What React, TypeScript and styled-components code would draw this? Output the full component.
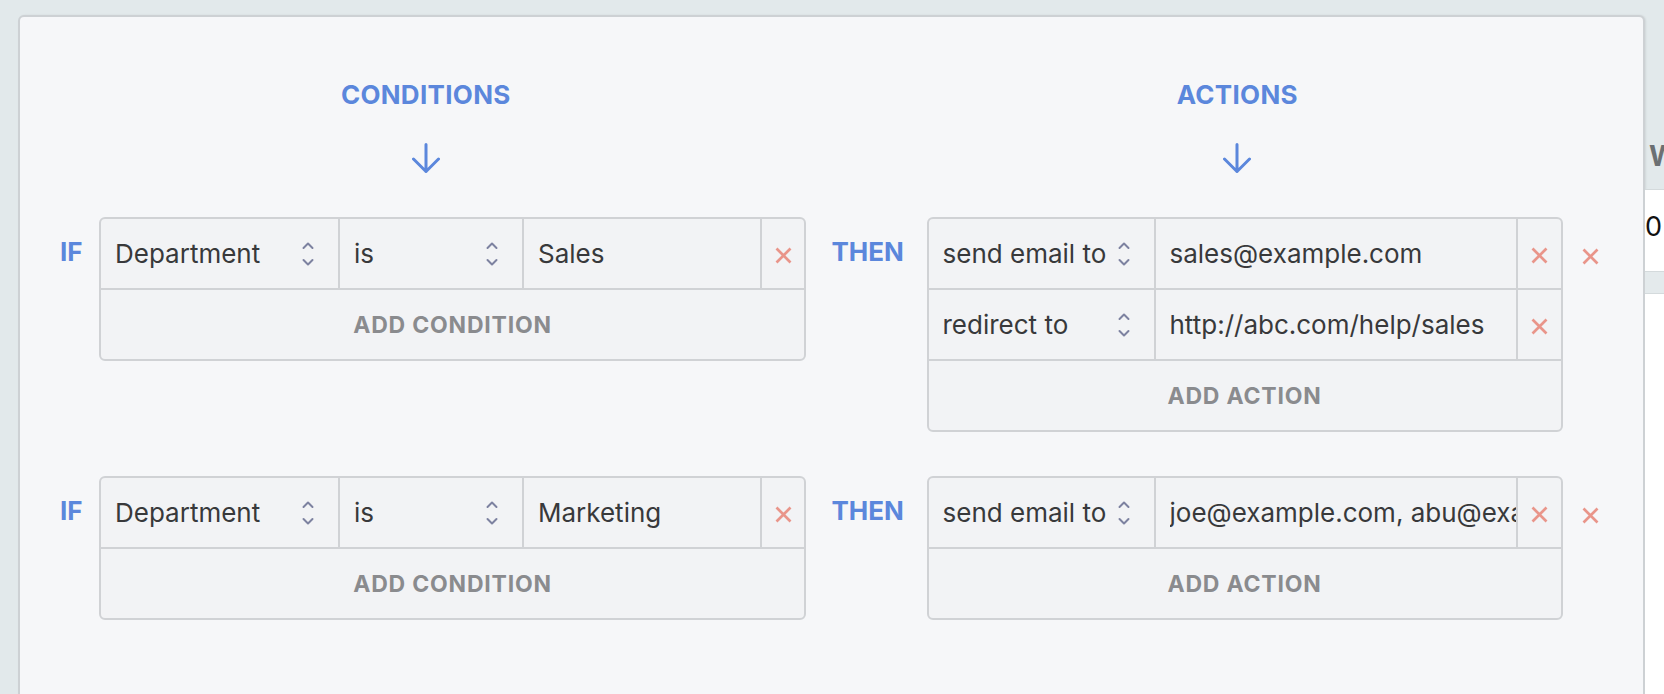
import styled, { createGlobalStyle } from "styled-components";

const GlobalStyle = createGlobalStyle`
  html, body {
    margin: 0;
    padding: 0;
    background: #e2e9eb;
    overflow: hidden;
  }
  body {
    font-family: Inter, "Noto Sans", sans-serif;
    color: #38393b;
  }
`;

const BLUE = "#5b87dc";
const LINE = "#d0d2d5";

const Page = styled.div`
  display: flex;
  align-items: flex-start;
  height: 694px;
  overflow: hidden;
`;

const Panel = styled.div`
  box-sizing: border-box;
  flex: 0 0 1627px;
  min-height: 720px;
  margin: 15px 0 0 18px;
  padding-top: 62px;
  background: #f6f7f9;
  border: 2px solid #cdd1d4;
  border-radius: 6px;
  box-shadow: 1px 0 2px rgba(0, 0, 0, 0.08);
`;

const Halves = styled.div<{ $gap?: number }>`
  display: grid;
  grid-template-columns: 1fr 1fr;
  margin-top: ${({ $gap }) => $gap ?? 0}px;
`;

const HeaderCell = styled.div`
  display: flex;
  flex-direction: column;
  align-items: center;
`;

const HeaderTitle = styled.div`
  font-size: 26px;
  line-height: 32px;
  font-weight: 700;
  color: ${BLUE};
  letter-spacing: 0.3px;
`;

const ArrowWrap = styled.div`
  margin-top: 32px;
  height: 30px;
  svg {
    display: block;
  }
`;

const Side = styled.div<{ $inset?: number }>`
  display: flex;
  align-items: flex-start;
  padding-left: ${({ $inset }) => $inset ?? 0}px;
`;

const Keyword = styled.div<{ $width: number }>`
  flex: 0 0 ${({ $width }) => $width}px;
  padding-top: 19px;
  font-size: 26px;
  line-height: 32px;
  font-weight: 700;
  color: ${BLUE};
`;

const Box = styled.div<{ $width: number }>`
  box-sizing: border-box;
  flex: 0 0 ${({ $width }) => $width}px;
  border: 2px solid ${LINE};
  border-radius: 6px;
  background: #f2f3f5;
  overflow: hidden;
`;

const Row = styled.div<{ $cols: string }>`
  display: grid;
  grid-template-columns: ${({ $cols }) => $cols};
  height: 69px;

  & + & {
    border-top: 2px solid ${LINE};
  }
`;

const Cell = styled.div`
  display: flex;
  align-items: center;
  min-width: 0;
  padding: 0 14px;
  font-size: 26px;
  white-space: nowrap;

  & + & {
    border-left: 2px solid ${LINE};
  }
`;

const SelectCell = styled(Cell)`
  justify-content: space-between;
  padding-right: 24px;
`;

const InputCell = styled(Cell)`
  padding-right: 0;
`;

const TextInput = styled.input`
  width: 100%;
  min-width: 0;
  padding: 0;
  border: none;
  outline: none;
  background: transparent;
  font-family: inherit;
  font-size: 26px;
  color: #38393b;
`;

const RemoveCell = styled(Cell)`
  justify-content: center;
  padding: 4px 0 0;
`;

const AddButton = styled.button`
  display: block;
  width: 100%;
  height: 69px;
  padding: 0;
  border: none;
  border-top: 2px solid ${LINE};
  background: transparent;
  font-family: inherit;
  font-size: 23px;
  font-weight: 700;
  letter-spacing: 0.8px;
  color: #8a8b8e;
  text-transform: uppercase;
  box-sizing: content-box;
`;

const RemoveRule = styled.div`
  margin-left: 19px;
  padding-top: 31px;
  svg {
    display: block;
  }
`;

/* the table that sits behind the panel, only a sliver shows */
const Backdrop = styled.div`
  flex: 1;
  min-width: 0;
  display: flex;
  flex-direction: column;
  padding-top: 140px;
  height: 694px;
  box-sizing: border-box;
  overflow: hidden;
`;

const BackdropHead = styled.div`
  height: 49px;
  padding-left: 4px;
  font-size: 28px;
  line-height: 32px;
  font-weight: 700;
  color: #6b7073;
  white-space: nowrap;
`;

const BackdropRow = styled.div`
  display: flex;
  align-items: center;
  height: 82px;
  padding-bottom: 8px;
  box-sizing: border-box;
  border-top: 1px solid #d4dadc;
  background: #fff;
  font-size: 27px;
  color: #111;
`;

const BackdropBand = styled.div`
  height: 21px;
  border-top: 1px solid #d4dadc;
  border-bottom: 1px solid #d4dadc;
  background: #e4eaec;
`;

const BackdropRest = styled.div`
  flex: 1;
  background: #fff;
`;

const DownArrow = () => (
  <svg width="28" height="30" viewBox="0 0 28 30" fill="none" stroke={BLUE} strokeWidth="3" strokeLinecap="round" strokeLinejoin="round">
    <path d="M14 1.5 V28.5 M1.5 16 L14 28.5 L26.5 16" />
  </svg>
);

const Chevrons = () => (
  <svg width="12" height="24" viewBox="0 0 12 24" fill="none" stroke="#7d82a0" strokeWidth="2" strokeLinecap="round" strokeLinejoin="round">
    <polyline points="1.5,6 6,1.5 10.5,6" />
    <polyline points="1.5,18 6,22.5 10.5,18" />
  </svg>
);

const Cross = () => (
  <svg width="17" height="17" viewBox="0 0 17 17" fill="none" stroke="#e9958a" strokeWidth="2.7">
    <path d="M1.5 1.5 L15.5 15.5 M15.5 1.5 L1.5 15.5" />
  </svg>
);

type Condition = { field: string; op: string; value: string };
type Action = { type: string; value: string };
type Rule = { conditions: Condition[]; actions: Action[] };

const rules: Rule[] = [
  {
    conditions: [{ field: "Department", op: "is", value: "Sales" }],
    actions: [
      { type: "send email to", value: "sales@example.com" },
      { type: "redirect to", value: "http://abc.com/help/sales" },
    ],
  },
  {
    conditions: [{ field: "Department", op: "is", value: "Marketing" }],
    actions: [{ type: "send email to", value: "joe@example.com, abu@example.com" }],
  },
];

function RuleRow({ rule }: { rule: Rule }) {
  return (
    <Halves $gap={44}>
      <Side $inset={40}>
        <Keyword $width={39}>IF</Keyword>
        <Box $width={707}>
          {rule.conditions.map((c, i) => (
            <Row key={i} $cols="237px 184px 1fr 44px">
              <SelectCell>
                {c.field}
                <Chevrons />
              </SelectCell>
              <SelectCell>
                {c.op}
                <Chevrons />
              </SelectCell>
              <InputCell>
                <TextInput readOnly value={c.value} />
              </InputCell>
              <RemoveCell>
                <Cross />
              </RemoveCell>
            </Row>
          ))}
          <AddButton>Add condition</AddButton>
        </Box>
      </Side>
      <Side>
        <Keyword $width={95}>THEN</Keyword>
        <Box $width={636}>
          {rule.actions.map((a, i) => (
            <Row key={i} $cols="225px 1fr 45px">
              <SelectCell>
                {a.type}
                <Chevrons />
              </SelectCell>
              <InputCell>
                <TextInput readOnly value={a.value} />
              </InputCell>
              <RemoveCell>
                <Cross />
              </RemoveCell>
            </Row>
          ))}
          <AddButton>Add action</AddButton>
        </Box>
        <RemoveRule>
          <Cross />
        </RemoveRule>
      </Side>
    </Halves>
  );
}

export default function App() {
  return (
    <>
      <GlobalStyle />
      <Page>
        <Panel>
          <Halves>
            <HeaderCell>
              <HeaderTitle>CONDITIONS</HeaderTitle>
              <ArrowWrap>
                <DownArrow />
              </ArrowWrap>
            </HeaderCell>
            <HeaderCell>
              <HeaderTitle>ACTIONS</HeaderTitle>
              <ArrowWrap>
                <DownArrow />
              </ArrowWrap>
            </HeaderCell>
          </Halves>
          {rules.map((r, i) => (
            <RuleRow key={i} rule={r} />
          ))}
        </Panel>
        <Backdrop>
          <BackdropHead>W</BackdropHead>
          <BackdropRow>0</BackdropRow>
          <BackdropBand />
          <BackdropRest />
        </Backdrop>
      </Page>
    </>
  );
}
